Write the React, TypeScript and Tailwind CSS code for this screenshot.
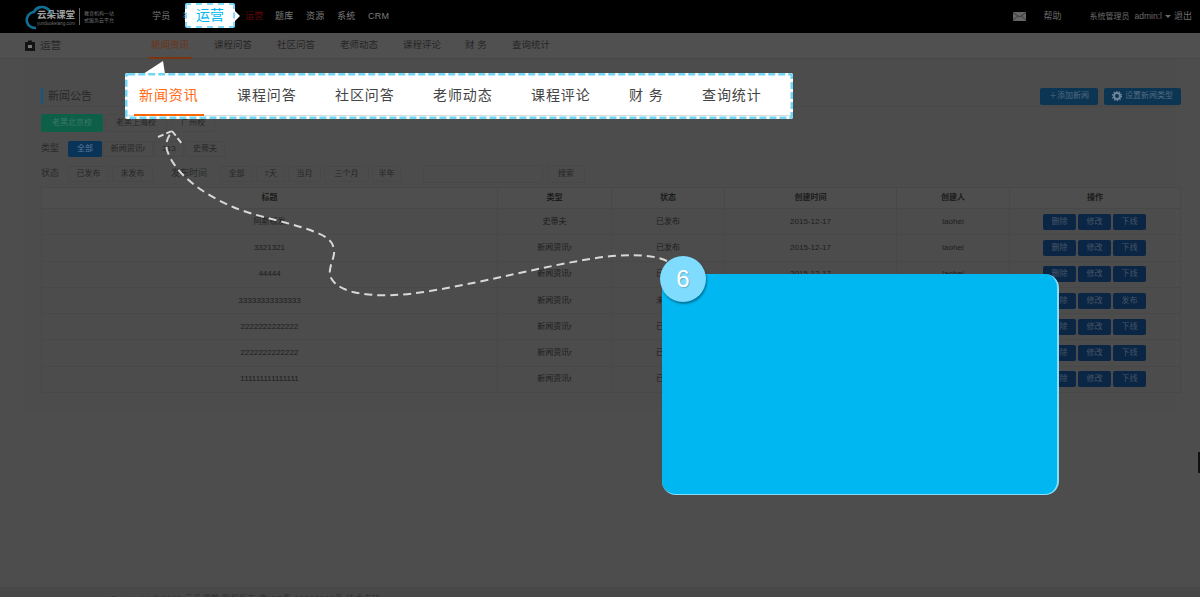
const cjk = { fontFamily: '"Liberation Sans","Noto Sans CJK SC",sans-serif' };

const topNav = [
  { t: "学员", c: "text-[#7c7c7c]", w: "w-[31px]" },
  { t: "教务", c: "text-[#7c7c7c]", w: "w-[62px]" },
  { t: "运营", c: "text-[#5e0808]", w: "w-[30px]" },
  { t: "题库", c: "text-[#7c7c7c]", w: "w-[31px]" },
  { t: "资源", c: "text-[#7c7c7c]", w: "w-[31px]" },
  { t: "系统", c: "text-[#7c7c7c]", w: "w-[31px]" },
  { t: "CRM", c: "text-[#7c7c7c]", w: "w-[30px]" },
];

const subTabs = [
  { t: "新闻资讯", w: "w-[63px]" },
  { t: "课程问答", w: "w-[63px]" },
  { t: "社区问答", w: "w-[63px]" },
  { t: "老师动态", w: "w-[63px]" },
  { t: "课程评论", w: "w-[62px]" },
  { t: "财 务", w: "w-[47px]" },
  { t: "查询统计", w: "w-[50px]" },
];

const bigTabs = [
  { t: "新闻资讯", w: "w-[98px]" },
  { t: "课程问答", w: "w-[98px]" },
  { t: "社区问答", w: "w-[98px]" },
  { t: "老师动态", w: "w-[98px]" },
  { t: "课程评论", w: "w-[98px]" },
  { t: "财 务", w: "w-[73px]" },
  { t: "查询统计", w: "w-[70px]" },
];

const rows = [
  ["阿斯顿发", "史蒂夫", "已发布", "下线"],
  ["3321321", "新闻资讯r", "已发布", "下线"],
  ["44444", "新闻资讯r", "已发布", "下线"],
  ["33333333333333", "新闻资讯r", "未发布", "发布"],
  ["2222222222222", "新闻资讯r", "已发布", "下线"],
  ["2222222222222", "新闻资讯r", "已发布", "下线"],
  ["111111111111111", "新闻资讯r", "已发布", "下线"],
];

function Chip({ children, className }: { children: React.ReactNode; className: string }) {
  return (
    <span className={`flex h-[16px] items-center justify-center rounded-[2px] border border-[#484848] text-[8px] text-[#262626] ${className}`}>
      {children}
    </span>
  );
}

function OpBtn({ children }: { children: React.ReactNode }) {
  return (
    <span className="flex h-[16px] w-[33px] items-center justify-center rounded-[2px] bg-[#0b2644] text-[8px] text-[#465567]">
      {children}
    </span>
  );
}

export default function App() {
  return (
    <div style={cjk} className="relative flex h-[597px] w-[1200px] flex-col overflow-hidden bg-[#4d4d4d]">
      <header className="flex h-[33px] shrink-0 items-center bg-black">
        <div className="ml-[25px] flex w-[127px] items-center">
          <svg width="34" height="28" viewBox="0 0 34 28" className="mt-[1px] shrink-0">
            <path d="M11 25 C3 25 1 19 2 15 C3 11 7 9 9 9 C11 4 17 3 21 5 C25 7 26 10 26 12" fill="none" stroke="#0f6f95" strokeWidth="2.6" />
          </svg>
          <div className="-ml-[22px] mt-[3px] flex flex-col leading-none">
            <span className="text-[9.5px] font-bold text-[#a0a0a0]">云朵课堂</span>
            <span className="mt-[2px] text-[4.5px] text-[#707070]">yunduoketang.com</span>
          </div>
          <div className="ml-[4px] h-[17px] w-px bg-[#666]" />
          <div className="ml-[4px] flex flex-col text-[5px] leading-[7px] text-[#707070]">
            <span>教育机构一站</span>
            <span>式服务云平台</span>
          </div>
        </div>
        <nav className="flex items-center text-[9px]">
          {topNav.map((n) => (
            <span key={n.t} className={`${n.w} ${n.c} tracking-[0.3px]`}>{n.t}</span>
          ))}
        </nav>
        <div className="ml-auto flex items-center text-[8px] text-[#6c6c6c]">
          <svg width="13" height="9" viewBox="0 0 13 9" className="mr-[18px]">
            <rect width="13" height="9" fill="#666" />
            <path d="M0 0.5 L6.5 5 L13 0.5 M0 8.5 L4.5 4 M13 8.5 L8.5 4" fill="none" stroke="#2b2b2b" strokeWidth="0.8" />
          </svg>
          <span className="mr-[28px] text-[9px]">帮助</span>
          <span>系统管理员</span>
          <span className="ml-[5px] text-[8.5px]">admin:l</span>
          <span className="ml-[3px] h-0 w-0 border-x-[3px] border-t-[3px] border-x-transparent border-t-[#6c6c6c]" />
          <span className="ml-[3px] mr-[8px] text-[9px]">退出</span>
        </div>
      </header>

      <div className="flex h-[26px] shrink-0 items-center border-b border-[#484848] bg-[#505050]">
        <svg width="10" height="11" viewBox="0 0 10 11" className="ml-[25px]">
          <path d="M3 2 V0.5 H7 V2 H10 V11 H0 V2 Z" fill="#141414" />
          <rect x="3" y="5" width="4" height="3" fill="#777" />
        </svg>
        <span className="ml-[5px] w-[111px] text-[10.5px] text-[#262626]">运营</span>
        <div className="flex h-full items-center text-[9.5px] text-[#262626]">
          {subTabs.map((s, i) => (
            <span key={s.t} className={`${s.w} ${i === 0 ? "text-[#6e3418]" : ""}`}>{s.t}</span>
          ))}
        </div>
      </div>

      <main className="mx-[24px] h-[355px] shrink-0 bg-[#4c4c4c] pl-[17px] pr-[15px] pt-[28px]">
        <div className="-mr-[20px] flex h-[18px] items-center">
          <span className="h-[16px] w-[2px] bg-[#0f5a85]" />
          <span className="ml-[5px] text-[11px] text-[#282828]">新闻公告</span>
          <span className="ml-auto flex h-[17px] w-[58px] items-center justify-center rounded-[2px] bg-[#0c3453] text-[8px] text-[#526b80]">＋添加新闻</span>
          <span className="ml-[6px] flex h-[17px] w-[77px] items-center justify-center gap-[3px] rounded-[2px] bg-[#0c3453] text-[8px] text-[#526b80]">
            <svg width="10" height="10" viewBox="0 0 10 10">
              <circle cx="5" cy="5" r="3" fill="none" stroke="#6f8698" strokeWidth="2" />
              <circle cx="5" cy="5" r="4.6" fill="none" stroke="#6f8698" strokeWidth="1.2" strokeDasharray="1.4 1.5" />
            </svg>
            设置新闻类型
          </span>
        </div>
        <div className="-mr-[19px] mt-[1px] border-t border-[#484848]" />

        <div className="mt-[7px] flex gap-[2px]">
          <span className="flex h-[18px] w-[62px] items-center justify-center rounded-[2px] bg-[#0e5f48] text-[8px] text-[#3a7a65]">老黑北京校</span>
          <Chip className="!h-[18px] w-[62px]">老黑上海校</Chip>
          <Chip className="!h-[18px] ml-[2px] w-[44px]">广州校</Chip>
        </div>

        <div className="mt-[9px] flex items-center">
          <span className="w-[27px] text-[9px] text-[#2a2a2a]">类型</span>
          <span className="flex h-[16px] w-[34px] items-center justify-center rounded-[2px] bg-[#0a3358] text-[8px] text-[#5c7a96]">全部</span>
          <Chip className="ml-px w-[50px]">新闻资讯r</Chip>
          <Chip className="ml-px w-[30px]">213</Chip>
          <Chip className="ml-px w-[40px]">史蒂夫</Chip>
        </div>

        <div className="mt-[8px] flex h-[17px] items-center">
          <span className="w-[27px] text-[9px] text-[#2a2a2a]">状态</span>
          <Chip className="w-[41px]">已发布</Chip>
          <Chip className="ml-[3px] w-[41px]">未发布</Chip>
          <span className="ml-[18px] w-[49px] text-[9px] text-[#2a2a2a]">发布时间</span>
          <Chip className="w-[33px]">全部</Chip>
          <Chip className="ml-[3px] w-[29px]">7天</Chip>
          <Chip className="ml-[3px] w-[33px]">当月</Chip>
          <Chip className="ml-[3px] w-[45px]">三个月</Chip>
          <Chip className="ml-[3px] w-[29px]">半年</Chip>
          <span className="ml-[22px] h-[18px] w-[120px] rounded-[2px] border border-[#484848]" />
          <Chip className="!h-[18px] ml-[4px] w-[38px]">搜索</Chip>
        </div>

        <table className="mt-[5px] w-[1139px] table-fixed border-collapse border border-[#484848] text-center text-[8px] text-[#1c1c1c]">
          <colgroup>
            <col className="w-[456px]" />
            <col className="w-[114px]" />
            <col className="w-[113px]" />
            <col className="w-[172px]" />
            <col className="w-[113px]" />
            <col className="w-[171px]" />
          </colgroup>
          <thead>
            <tr className="h-[21px] border-b border-[#484848] bg-[#4e4e4e] font-bold">
              {["标题", "类型", "状态", "创建时间", "创建人", "操作"].map((h) => (
                <th key={h} className="border-l border-[#484848] font-bold">{h}</th>
              ))}
            </tr>
          </thead>
          <tbody>
            {rows.map((r, i) => (
              <tr key={i} className="h-[26.3px] border-b border-[#484848]">
                <td className="border-l border-[#484848]">{r[0]}</td>
                <td className="border-l border-[#484848]">{r[1]}</td>
                <td className="border-l border-[#484848]">{r[2]}</td>
                <td className="border-l border-[#484848]">2015-12-17</td>
                <td className="border-l border-[#484848]">laohei</td>
                <td className="border-l border-[#484848]">
                  <div className="flex justify-center gap-[2px] pr-px">
                    <OpBtn>删除</OpBtn>
                    <OpBtn>修改</OpBtn>
                    <OpBtn>{r[3]}</OpBtn>
                  </div>
                </td>
              </tr>
            ))}
          </tbody>
        </table>
      </main>

      <footer className="mt-auto h-[10px] w-full shrink-0 overflow-hidden bg-[#484848] pl-[110px] pt-[7px] text-[8px] leading-[10px] tracking-[0.6px] text-[#303030]">
        Copyright © 2015 云朵课堂 版权所有 京ICP备 00000000号 技术支持
      </footer>

      <span className="absolute right-0 top-[452px] h-[21px] w-[2px] bg-[#111]" />
      <span className="absolute left-[148px] top-[57px] h-[2px] w-[44px] bg-[#7a3410]" />

      {/* highlighted top-nav callout */}
      <div className="absolute left-[185px] top-[3px] flex h-[25px] w-[50px] items-center justify-center rounded-[2px] border-2 border-dashed border-[#7fdcff] bg-white text-[14px] text-[#00b7f1]">
        运营
        <span className="absolute -right-[7px] top-[6px] h-0 w-0 border-y-[5px] border-l-[5px] border-y-transparent border-l-white" />
      </div>

      {/* highlighted sub-nav callout */}
      <svg width="24" height="15" viewBox="0 0 24 15" className="absolute left-[143px] top-[60px]">
        <path d="M0 14 L20 1 L22 14 Z" fill="#fff" />
      </svg>
      <div className="absolute left-[125px] top-[73px] h-[46px] w-[668px] rounded-[2px] bg-white px-[2px] pt-[2px]">
        <div className="flex h-[41px] items-center border-b border-[#dddddd] pl-[12px] text-[14px] text-[#444]">
          {bigTabs.map((b, i) => (
            <span key={b.t} className={`${b.w} tracking-[0.9px] ${i === 0 ? "text-[#ff6a13]" : ""}`}>{b.t}</span>
          ))}
        </div>
        <span className="absolute left-[9px] top-[41px] h-[2px] w-[70px] bg-[#ff6600]" />
        <svg width="668" height="46" viewBox="0 0 668 46" className="pointer-events-none absolute left-0 top-0">
          <rect x="1.25" y="1.25" width="665.5" height="43.5" rx="2" fill="none" stroke="#6fd6f5" strokeWidth="2.5" strokeDasharray="7 3" />
        </svg>
      </div>

      {/* dashed route */}
      <svg width="1200" height="597" viewBox="0 0 1200 597" className="pointer-events-none absolute left-0 top-0">
        <path
          d="M667 261 C650 253 620 254 590 259 C540 267 490 281 430 291 C400 296 375 297 353 292 C338 288 328 280 330 270 C331 262 335 256 334 250 C333 240 325 236 315 232 C290 222 260 218 233 207 C205 195 175 175 167 150 C165 142 168 137 172 131"
          fill="none"
          stroke="#d8d8d8"
          strokeWidth="2"
          strokeDasharray="8 5"
        />
        <path d="M158 137 L172 131 M172 131 L183 145" fill="none" stroke="#d8d8d8" strokeWidth="2" strokeDasharray="6 3" />
      </svg>

      {/* step card */}
      <div className="absolute left-[662px] top-[274px] h-[221px] w-[397px] rounded-[14px] border-b border-r-2 border-[#86e0fb] bg-[#00b7f1]" />
      <div className="absolute left-[660px] top-[256px] flex h-[46px] w-[46px] items-center justify-center rounded-full bg-[#7fdcff] pb-[1px] text-[24px] text-white shadow-[1px_2px_2px_rgba(0,0,0,0.35)] [text-shadow:1px_1px_1px_rgba(0,0,0,0.2)]">
        6
      </div>
    </div>
  );
}
